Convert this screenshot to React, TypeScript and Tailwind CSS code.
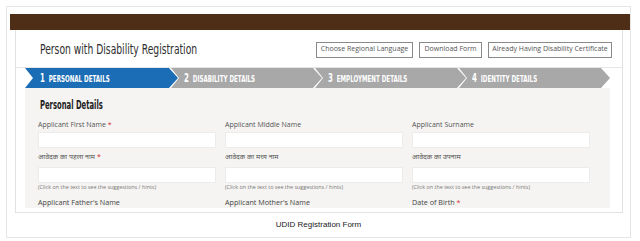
export default function App() {
  const steps = [
    { n: "1", label: "PERSONAL DETAILS", active: true },
    { n: "2", label: "DISABILITY DETAILS", active: false },
    { n: "3", label: "EMPLOYMENT DETAILS", active: false },
    { n: "4", label: "IDENTITY DETAILS", active: false },
  ];
  const cols = [
    { a: "Applicant First Name", aReq: true, h: "आवेदक का पहला नाम", hReq: true, b: "Applicant Father's Name", bReq: false },
    { a: "Applicant Middle Name", aReq: false, h: "आवेदक का मध्य नाम", hReq: false, b: "Applicant Mother's Name", bReq: false },
    { a: "Applicant Surname", aReq: false, h: "आवेदक का उपनाम", hReq: false, b: "Date of Birth", bReq: true },
  ];
  return (
    <div className="w-[640px] h-[241px] bg-white overflow-hidden pt-[6px] pl-[6px] pr-[9px]">
      <div className="h-[232px] border border-[#e6e6e6] pt-[7px] flex flex-col">
        <div className="ml-[3px] h-[16px] bg-[#4f2e18]" />
        <div className="ml-[8px] w-[608px] h-[183px] border-l border-r border-b border-[#e2e2e2] bg-white flex flex-col overflow-hidden">
          <div className="h-[38px] shrink-0 border-b border-[#e6e6e6] flex items-center pl-[24px] pr-[10px] pt-[2px]">
            <div className="font-['DejaVu_Sans_Condensed',sans-serif] text-[14px] text-[#2e2e2e] whitespace-nowrap scale-x-[0.73] origin-left">
              Person with Disability Registration
            </div>
            <div className="ml-auto flex gap-[6px] font-['Open_Sans',sans-serif] text-[7px] text-[#555]">
              <div className="w-[97px] h-[16px] border border-[#8a8a8a] bg-white flex items-center justify-center">Choose Regional Language</div>
              <div className="w-[63px] h-[16px] border border-[#8a8a8a] bg-white flex items-center justify-center">Download Form</div>
              <div className="w-[124px] h-[16px] border border-[#8a8a8a] bg-white flex items-center justify-center">Already Having Disability Certificate</div>
            </div>
          </div>
          <div className="pl-[9px] shrink-0">
            <div className="flex h-[20px] font-['DejaVu_Sans_Condensed',sans-serif] font-bold text-white">
              {steps.map((s, i) => (
                <div
                  key={s.n}
                  className={`${i === 0 ? "w-[153px] pl-[15px]" : "w-[151px] -ml-[7px] pl-[13px]"} ${s.active ? "bg-[#1b6db6]" : "bg-[#a8a8a8]"} shrink-0 [clip-path:polygon(0_0,calc(100%_-_9px)_0,100%_50%,calc(100%_-_9px)_100%,0_100%,8px_50%)] flex items-center`}
                >
                  <div className="flex items-center gap-[6px] whitespace-nowrap scale-x-[0.65] origin-left">
                    <span className="text-[12px] leading-none">{s.n}</span>
                    <span className="text-[9.5px] leading-none pt-[1px]">{s.label}</span>
                  </div>
                </div>
              ))}
            </div>
            <div className="w-[585px] h-[120px] bg-[#f5f4f2] pl-[13px] pt-[10px] overflow-hidden">
              <div className="font-['DejaVu_Sans_Condensed',sans-serif] font-bold text-[11.5px] leading-[14px] text-[#222] pl-[3px] whitespace-nowrap scale-x-[0.66] origin-left">
                Personal Details
              </div>
              <div className="grid grid-cols-[178px_178px_178px] gap-x-[9px] mt-[8px]">
                {cols.map((c) => (
                  <div key={c.a} className="flex flex-col">
                    <div className="font-['Open_Sans',sans-serif] text-[7px] leading-[10px] text-[#555]">
                      {c.a}
                      {c.aReq && <span className="text-[#d32f2f]"> *</span>}
                    </div>
                    <div className="mt-[2px] h-[16px] bg-white border border-[#ececec]" />
                    <div className="mt-[5px] font-['Noto_Sans_Devanagari','Lohit_Devanagari','Open_Sans',sans-serif] text-[7px] leading-[10px] text-[#555]">
                      {c.h}
                      {c.hReq && <span className="text-[#d32f2f]"> *</span>}
                    </div>
                    <div className="mt-[4px] h-[16px] bg-white border border-[#ececec]" />
                    <div className="mt-[1px] font-['Open_Sans',sans-serif] text-[5.4px] leading-[6px] text-[#777] whitespace-nowrap">
                      (Click on the text to see the suggestions / hints)
                    </div>
                    <div className="mt-[7px] font-['Open_Sans',sans-serif] text-[7.2px] leading-[10px] text-[#444]">
                      {c.b}
                      {c.bReq && <span className="text-[#d32f2f]"> *</span>}
                    </div>
                  </div>
                ))}
              </div>
            </div>
          </div>
        </div>
        <div className="flex-1 flex items-center justify-center font-['Liberation_Sans',Arial,sans-serif] text-[8px] text-[#222]">
          UDID Registration Form
        </div>
      </div>
    </div>
  );
}
